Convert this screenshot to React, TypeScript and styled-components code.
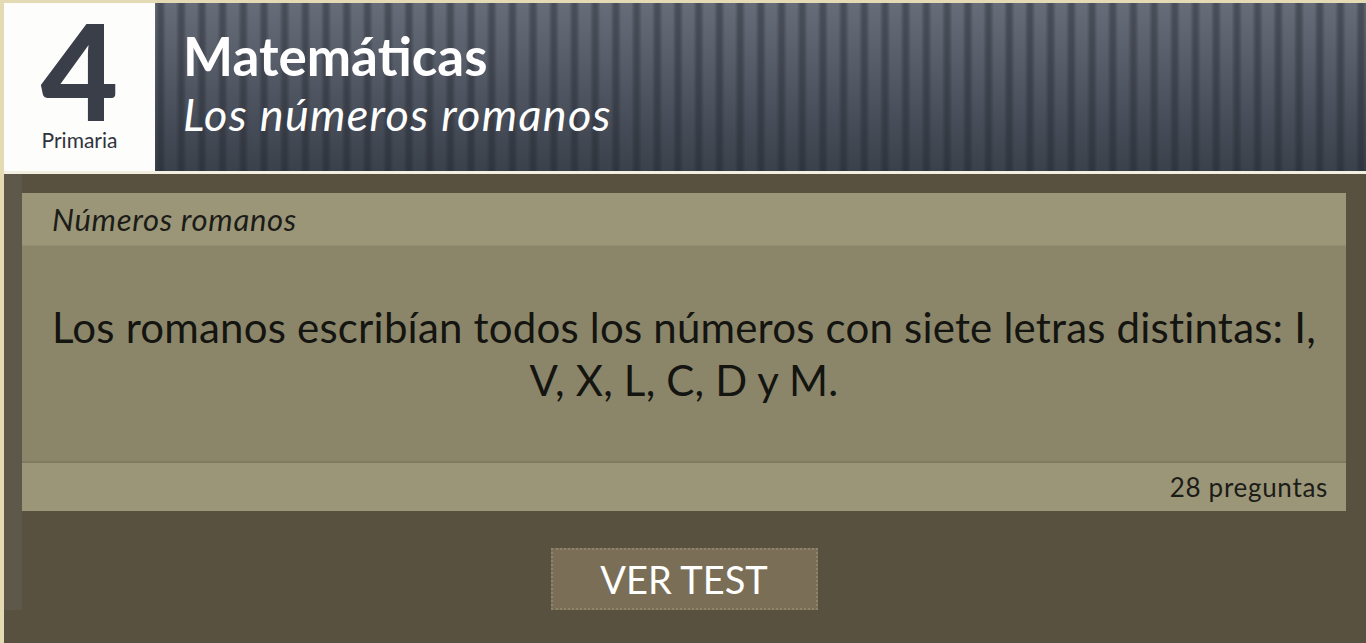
import React from "react";
import styled, { createGlobalStyle } from "styled-components";

const GlobalStyle = createGlobalStyle`
  body {
    margin: 0;
    background-color: #595140;
    font-family: Lato, "Open Sans", sans-serif;
  }
`;

const Page = styled.div`
  min-height: 100vh;
  border-left: 4px solid #e4dab3;
  box-sizing: border-box;
`;

const Header = styled.header`
  display: flex;
  height: 168px;
  border-top: 3px solid #e4dab3;
  border-bottom: 3px solid #f3efe0;
`;

const GradeBox = styled.div`
  width: 151px;
  background-color: #fdfdfb;
  display: flex;
  flex-direction: column;
  align-items: center;
`;

const GradeNumber = styled.div`
  font-size: 134px;
  font-weight: 900;
  line-height: 0.85;
  color: #3a3e48;
  margin-top: 10px;
`;

const GradeLabel = styled.div`
  font-size: 21px;
  line-height: 1.2;
  color: #2f333c;
`;

const TitlePanel = styled.div`
  flex: 1;
  padding-left: 28px;
  display: flex;
  flex-direction: column;
  justify-content: center;
  background-image:
    repeating-linear-gradient(
      90deg,
      rgba(30, 34, 42, 0) 0px,
      rgba(30, 34, 42, 0.4) 4px,
      rgba(30, 34, 42, 0.4) 7px,
      rgba(30, 34, 42, 0) 11px,
      rgba(30, 34, 42, 0) 20.7px
    ),
    linear-gradient(180deg, #666c78 0%, #525864 45%, #3b414b 100%);
`;

const Subject = styled.h1`
  margin: 0;
  font-size: 53px;
  font-weight: 700;
  color: #ffffff;
  line-height: 1.1;
  margin-top: -6px;
`;

const Topic = styled.h2`
  margin: 0;
  font-size: 45px;
  font-weight: 400;
  font-style: italic;
  letter-spacing: 1.3px;
  color: #ffffff;
  line-height: 1.2;
  margin-top: 2px;
`;

const Content = styled.main`
  padding: 19px 20px 0 18px;
  box-shadow: inset 18px 0 0 #5e584a;
`;

const Card = styled.section`
  display: flex;
  flex-direction: column;
`;

const CardBar = styled.div<{ $align: "left" | "right"; $height: number }>`
  height: ${(p) => p.$height}px;
  display: flex;
  align-items: center;
  justify-content: ${(p) => (p.$align === "left" ? "flex-start" : "flex-end")};
  padding: 0 18px 0 30px;
  background-color: #9b9677;
  color: #1c1c18;
`;

const CardTitle = styled.span`
  font-size: 31px;
  font-style: italic;
  letter-spacing: 0.7px;
`;

const CardBody = styled.div`
  height: 218px;
  display: flex;
  align-items: center;
  justify-content: center;
  padding: 0 20px;
  background-color: #8b866a;
  border-top: 1px solid #938e71;
  border-bottom: 2px solid #807b60;
  box-sizing: border-box;
`;

const Statement = styled.p`
  margin: 0;
  font-size: 42px;
  line-height: 53px;
  letter-spacing: 0.2px;
  text-align: center;
  color: #141410;
`;

const QuestionCount = styled.span`
  font-size: 26px;
  letter-spacing: 0.7px;
  color: #1c1c18;
`;

const Actions = styled.div`
  display: flex;
  justify-content: center;
  padding-top: 37px;
`;

const TestButton = styled.button`
  width: 267px;
  height: 62px;
  background-color: #7a6f56;
  border: 2px dotted #8e846c;
  color: #ffffff;
  font-family: Lato, "Open Sans", sans-serif;
  font-size: 38px;
  cursor: pointer;
  &:hover {
    background-color: #85795e;
  }
`;

export default function App() {
  return (
    <>
      <GlobalStyle />
      <Page>
        <Header>
          <GradeBox>
            <GradeNumber>4</GradeNumber>
            <GradeLabel>Primaria</GradeLabel>
          </GradeBox>
          <TitlePanel>
            <Subject>Matemáticas</Subject>
            <Topic>Los números romanos</Topic>
          </TitlePanel>
        </Header>
        <Content>
          <Card>
            <CardBar $align="left" $height={52}>
              <CardTitle>Números romanos</CardTitle>
            </CardBar>
            <CardBody>
              <Statement>
                Los romanos escribían todos los números con siete letras distintas: I,
                <br />
                V, X, L, C, D y M.
              </Statement>
            </CardBody>
            <CardBar $align="right" $height={48}>
              <QuestionCount>28 preguntas</QuestionCount>
            </CardBar>
          </Card>
          <Actions>
            <TestButton>VER TEST</TestButton>
          </Actions>
        </Content>
      </Page>
    </>
  );
}
